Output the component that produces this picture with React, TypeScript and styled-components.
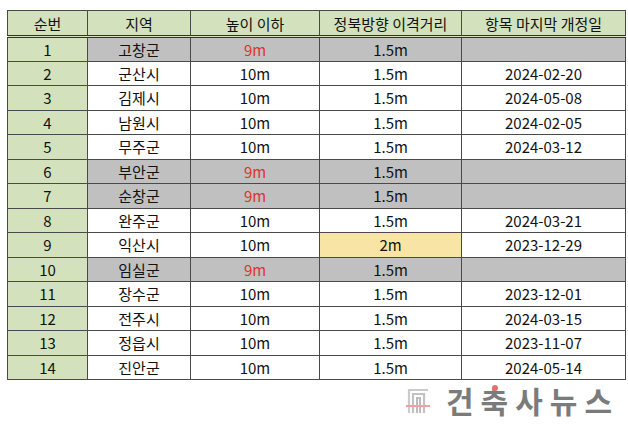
import React from "react";
import styled, { createGlobalStyle } from "styled-components";

const Global = createGlobalStyle`
  html, body { margin: 0; padding: 0; background: #ffffff; }
  body { font-family: "Noto Sans CJK KR", "Noto Sans", sans-serif; }
`;

const Page = styled.div`
  width: 628px;
  height: 432px;
  box-sizing: border-box;
  padding: 10px 8px 0 7px;
  display: flex;
  flex-direction: column;
`;

const Table = styled.table`
  border-collapse: collapse;
  table-layout: fixed;
  width: 613px;
  border: 1px solid #3a3a3a;
`;

const HeadCell = styled.th<{ $w: number }>`
  width: ${(p) => p.$w}px;
  height: 24px;
  padding: 0;
  background: #d3e2bd;
  border: 1px solid #4a4a4a;
  border-bottom: 3px double #333;
  font-weight: 400;
  font-size: 15px;
  color: #111;
  text-align: center;
  vertical-align: middle;
  line-height: 1;
`;

type Tone = "white" | "gray" | "green" | "yellow";
const bg: Record<Tone, string> = {
  white: "#ffffff",
  gray: "#c0c0c0",
  green: "#d3e2bd",
  yellow: "#f8e5a6",
};

const Row = styled.tr`
  height: 24.5px;
`;

const Cell = styled.td<{ $tone: Tone; $red?: boolean }>`
  padding: 0;
  background: ${(p) => bg[p.$tone]};
  border: 1px solid #4a4a4a;
  font-size: 15px;
  color: ${(p) => (p.$red ? "#e3302f" : "#111")};
  text-align: center;
  vertical-align: middle;
  line-height: 1;
`;

const Footer = styled.div`
  display: flex;
  justify-content: flex-end;
  align-items: center;
  gap: 16px;
  margin-top: 5px;
  padding-right: 1px;
  height: 30px;
`;

const LogoText = styled.span`
  position: relative;
  font-family: "Noto Sans CJK KR", sans-serif;
  font-weight: 700;
  font-size: 30px;
  letter-spacing: 7px;
  color: #7b7b7b;
  line-height: 1;
`;

const Dot = styled.span`
  position: absolute;
  left: 46px;
  top: 0px;
  width: 6px;
  height: 6px;
  border-radius: 50%;
  background: #e87070;
`;

const cols = [79, 102, 128, 141, 163];
const heads = ["순번", "지역", "높이 이하", "정북방향 이격거리", "항목 마지막 개정일"];

type R = { n: number; region: string; h: string; d: string; date: string; gray?: boolean; yellow?: boolean };
const rows: R[] = [
  { n: 1, region: "고창군", h: "9m", d: "1.5m", date: "", gray: true },
  { n: 2, region: "군산시", h: "10m", d: "1.5m", date: "2024-02-20" },
  { n: 3, region: "김제시", h: "10m", d: "1.5m", date: "2024-05-08" },
  { n: 4, region: "남원시", h: "10m", d: "1.5m", date: "2024-02-05" },
  { n: 5, region: "무주군", h: "10m", d: "1.5m", date: "2024-03-12" },
  { n: 6, region: "부안군", h: "9m", d: "1.5m", date: "", gray: true },
  { n: 7, region: "순창군", h: "9m", d: "1.5m", date: "", gray: true },
  { n: 8, region: "완주군", h: "10m", d: "1.5m", date: "2024-03-21" },
  { n: 9, region: "익산시", h: "10m", d: "2m", date: "2023-12-29", yellow: true },
  { n: 10, region: "임실군", h: "9m", d: "1.5m", date: "", gray: true },
  { n: 11, region: "장수군", h: "10m", d: "1.5m", date: "2023-12-01" },
  { n: 12, region: "전주시", h: "10m", d: "1.5m", date: "2024-03-15" },
  { n: 13, region: "정읍시", h: "10m", d: "1.5m", date: "2023-11-07" },
  { n: 14, region: "진안군", h: "10m", d: "1.5m", date: "2024-05-14" },
];

const LogoIcon = () => (
  <svg width="24" height="28" viewBox="0 0 24 28" fill="none">
    <path d="M3 27 V4 H22" stroke="#cbcbcb" strokeWidth="2.2" />
    <path d="M7 27 V8 H18 V27" stroke="#c2c2c2" strokeWidth="2.2" />
    <path d="M11 27 V12 H14 V27" stroke="#bcbcbc" strokeWidth="2" />
    <rect x="0" y="19" width="24" height="2" fill="#f0a0a0" />
  </svg>
);

export default function App() {
  return (
    <>
      <Global />
      <Page>
        <Table>
          <thead>
            <tr>
              {heads.map((h, i) => (
                <HeadCell key={h} $w={cols[i]}>
                  {h}
                </HeadCell>
              ))}
            </tr>
          </thead>
          <tbody>
            {rows.map((r) => {
              const t: Tone = r.gray ? "gray" : "white";
              return (
                <Row key={r.n}>
                  <Cell $tone="green">{r.n}</Cell>
                  <Cell $tone={t}>{r.region}</Cell>
                  <Cell $tone={t} $red={r.gray}>
                    {r.h}
                  </Cell>
                  <Cell $tone={r.yellow ? "yellow" : t}>{r.d}</Cell>
                  <Cell $tone={t}>{r.date}</Cell>
                </Row>
              );
            })}
          </tbody>
        </Table>
        <Footer>
          <LogoIcon />
          <LogoText>
            건축사뉴스
            <Dot />
          </LogoText>
        </Footer>
      </Page>
    </>
  );
}
